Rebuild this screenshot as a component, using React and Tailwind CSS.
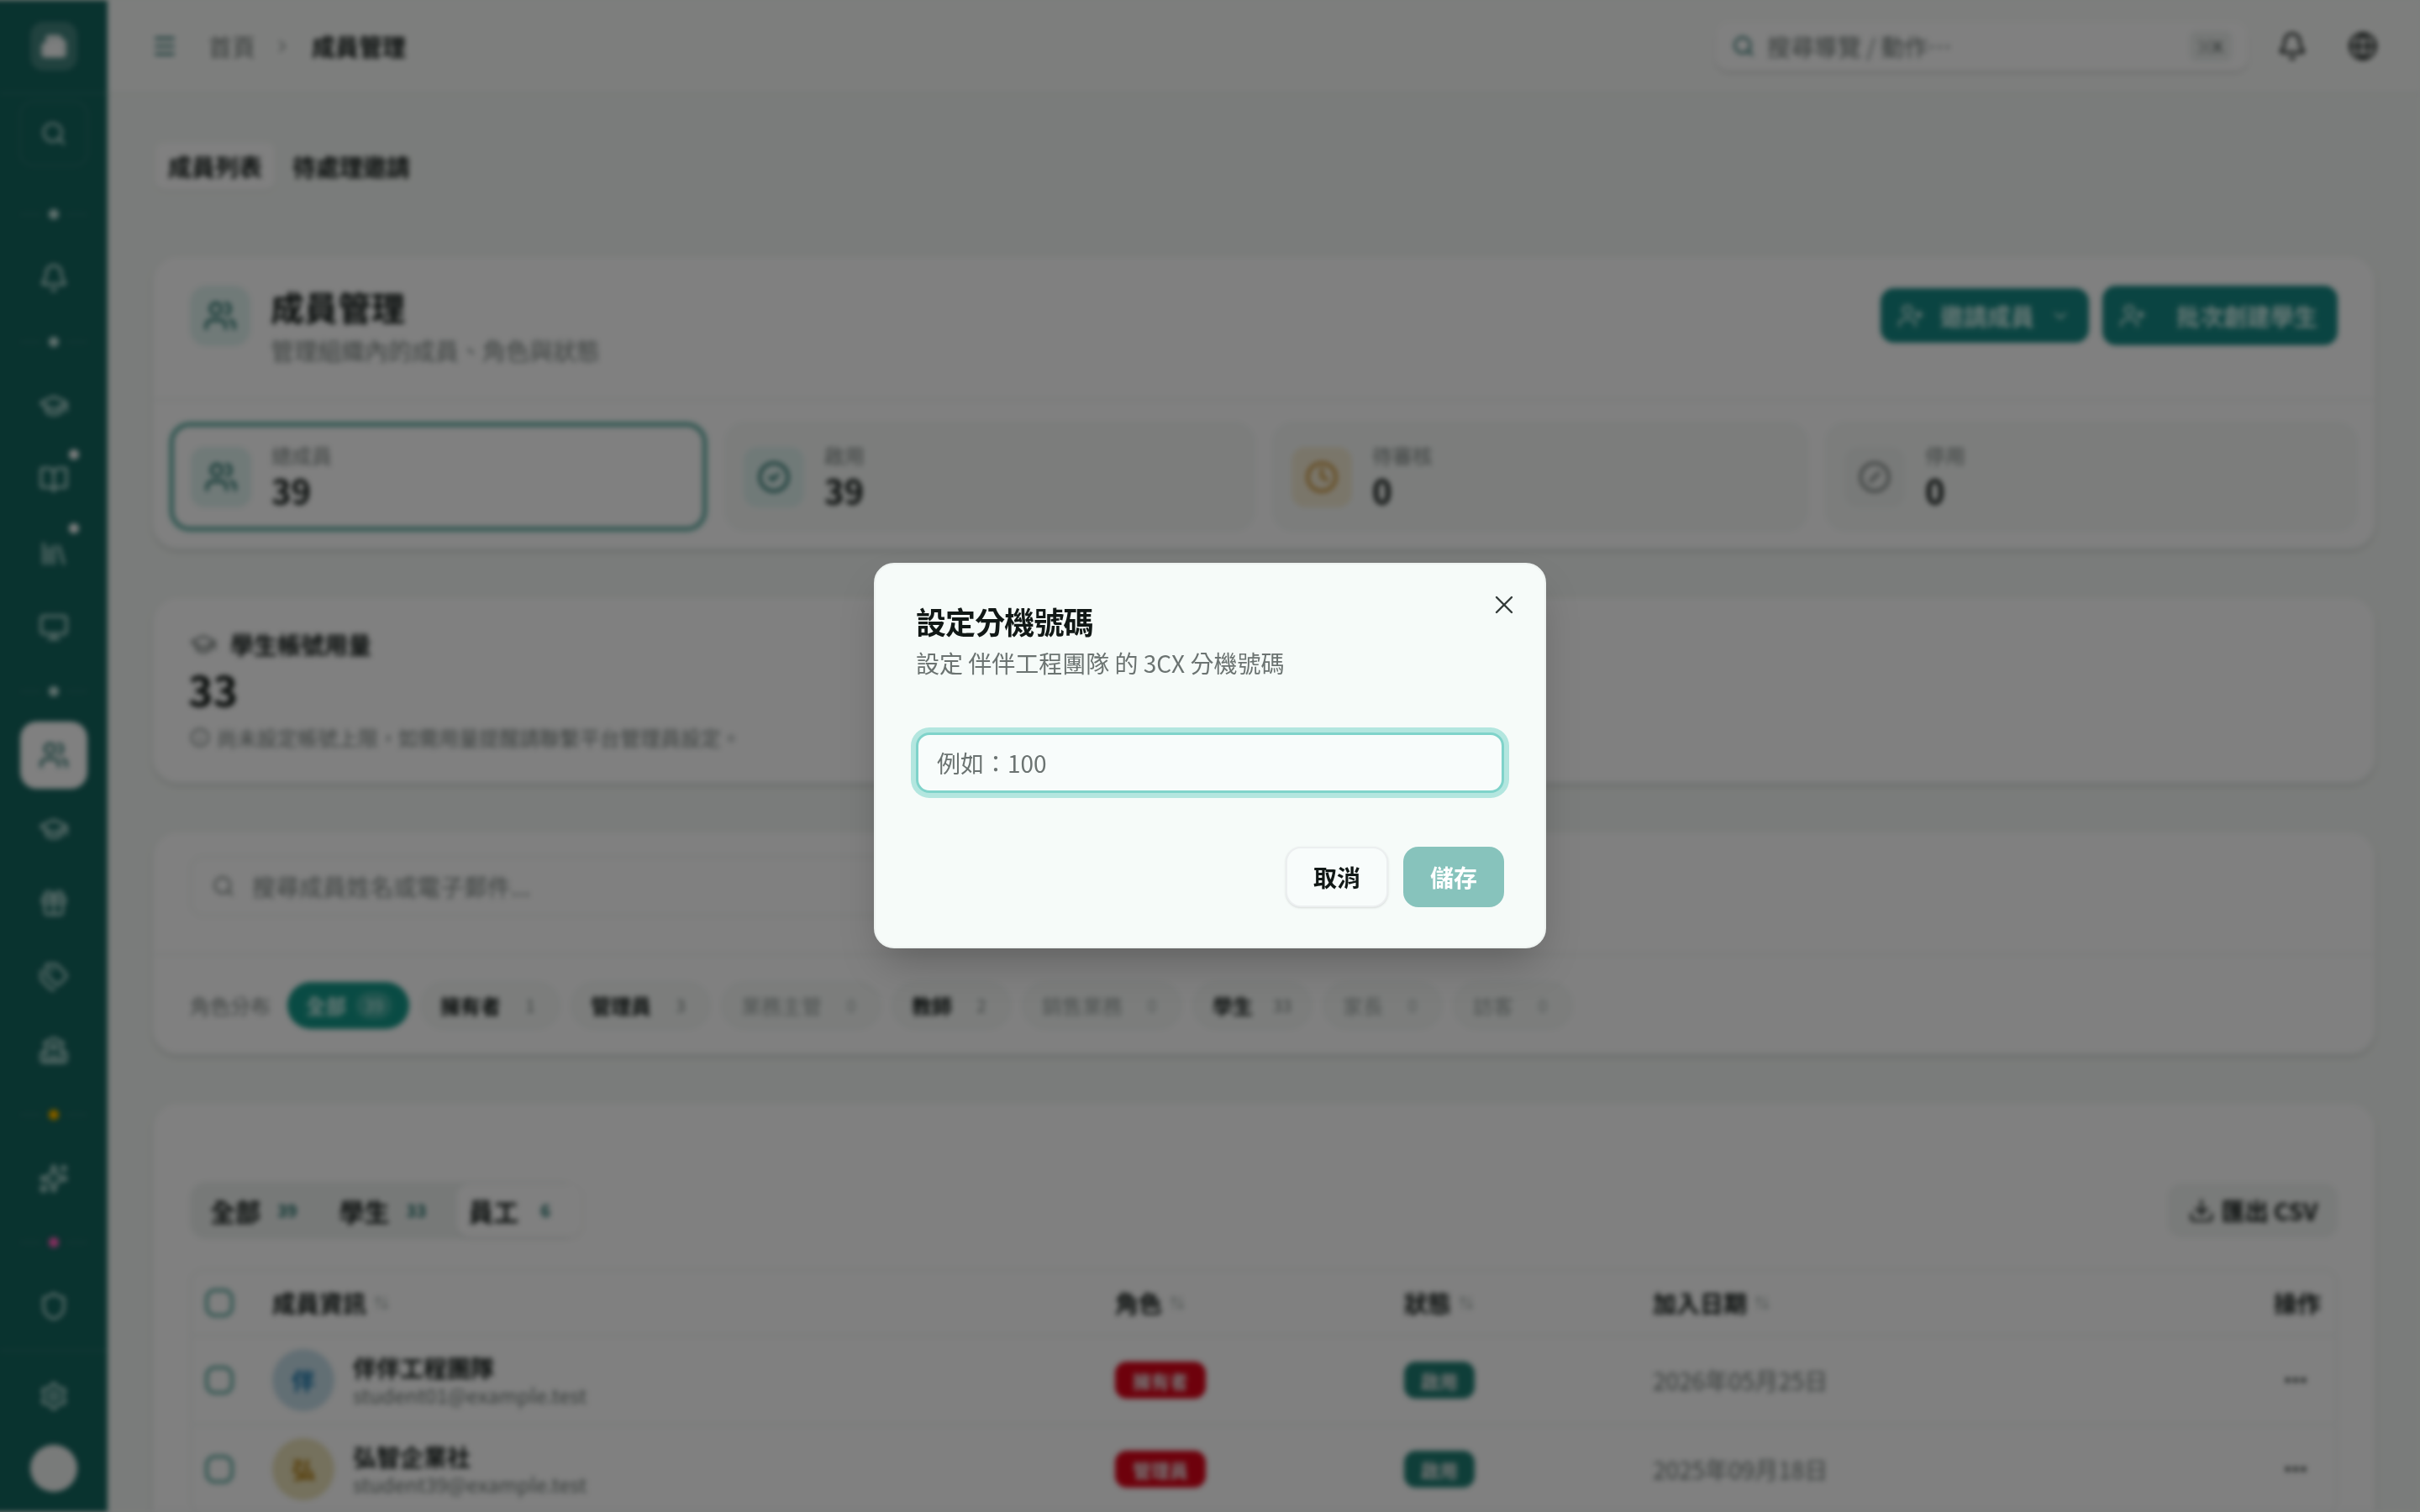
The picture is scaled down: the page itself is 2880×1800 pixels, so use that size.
import {
  Menu, ChevronRight, ChevronDown, Search, Bell, Globe, UserPlus, Users, CircleCheck, Clock, CircleSlash,
  GraduationCap, BookOpen, Library, Monitor, Gift, Tags, School, Sparkles, Shield, Settings, Info, Download,
  ArrowUpDown, Ellipsis, X, Building2,
} from "lucide-react";

const font = { fontFamily: '"Noto Sans CJK TC", "Noto Sans", sans-serif' };

const SideIcon = ({ icon: Icon, active, badge }) => (
  <div className="relative h-[88px] w-full flex items-center justify-center shrink-0">
    <div className={`w-[80px] h-[80px] rounded-[20px] flex items-center justify-center ${active ? "bg-white text-[#1d625c]" : "text-[#c9e4e0]"}`}>
      <Icon className="w-9 h-9" />
    </div>
    {badge && <span className="absolute right-[34px] top-[8px] w-3 h-3 rounded-full bg-white" />}
  </div>
);

const SideDot = ({ color = "bg-[#c9e4e0]" }) => (
  <div className="h-[64px] w-full flex items-center justify-center gap-[10px] shrink-0">
    <span className="w-[24px] h-[2px] bg-white/10" />
    <span className={`w-3 h-3 rounded-full ${color}`} />
    <span className="w-[24px] h-[2px] bg-white/10" />
  </div>
);

const Sidebar = () => (
  <aside className="w-[128px] h-screen shrink-0 bg-[#1d625c] flex flex-col items-center">
    <div className="w-full h-[112px] shrink-0 border-b-2 border-white/10 flex items-center justify-center">
      <div className="w-[56px] h-[58px] rounded-[16px] bg-white/20 flex items-center justify-center">
        <Building2 className="w-8 h-8 text-white fill-white/80" />
      </div>
    </div>
    <div className="w-[82px] h-[78px] mt-2 mb-[25px] shrink-0 rounded-[16px] border-2 border-white/10 flex items-center justify-center">
      <Search className="w-8 h-8 text-[#c9e4e0]" />
    </div>
    <SideDot />
    <SideIcon icon={Bell} />
    <SideDot />
    <SideIcon icon={GraduationCap} />
    <SideIcon icon={BookOpen} badge />
    <SideIcon icon={Library} badge />
    <SideIcon icon={Monitor} />
    <SideDot />
    <SideIcon icon={Users} active />
    <SideIcon icon={GraduationCap} />
    <SideIcon icon={Gift} />
    <SideIcon icon={Tags} />
    <SideIcon icon={School} />
    <SideDot color="bg-amber-400" />
    <SideIcon icon={Sparkles} />
    <SideDot color="bg-pink-400" />
    <SideIcon icon={Shield} />
    <div className="w-full mt-2 border-t-2 border-white/10 pt-[9px] flex flex-col items-center shrink-0">
      <SideIcon icon={Settings} />
      <div className="w-[56px] h-[56px] mt-[14px] rounded-full bg-[#f3f5f4]" />
    </div>
  </aside>
);

const Header = () => (
  <header className="h-[112px] shrink-0 pl-[52px] pr-[50px] flex items-center justify-between bg-white/60 border-b-2 border-[#e9eeec]">
    <div className="flex items-center">
      <Menu className="w-8 h-8 text-[#1d625c]" />
      <span className="ml-[36px] text-[28px] text-[#6f7775]">首頁</span>
      <ChevronRight className="w-6 h-6 ml-[20px] mr-[23px] text-[#8a9290]" />
      <span className="text-[28px] font-bold text-[#111816]">成員管理</span>
    </div>
    <div className="flex items-center">
      <div className="w-[635px] h-[58px] rounded-[16px] bg-white shadow-md px-5 flex items-center">
        <Search className="w-7 h-7 text-[#1d625c]" />
        <span className="ml-[14px] text-[28px] text-[#6f7775]">搜尋導覽 / 動作⋯</span>
        <span className="ml-auto px-[10px] h-[36px] rounded-[8px] bg-[#eef1f0] text-[18px] font-bold text-[#7a8280] flex items-center">⌘K</span>
      </div>
      <Bell className="ml-[34px] w-9 h-9 text-[#111816]" />
      <Globe className="ml-[48px] w-9 h-9 text-[#111816]" />
    </div>
  </header>
);

const Card = ({ className = "", children }) => (
  <section className={`rounded-[32px] bg-white border-2 border-[#f1f4f3] shadow-md ${className}`}>{children}</section>
);

const Stat = ({ icon: Icon, label, value, active, iconClass }) => (
  <div className={`h-[129px] rounded-[24px] flex items-center px-5 ${active ? "border-[5px] border-[#68a89f] ring-2 ring-[#d5efea]" : "bg-[#f8faf9] border-2 border-[#f3f6f5]"}`}>
    <div className={`w-[72px] h-[72px] rounded-[16px] flex items-center justify-center shrink-0 ${iconClass}`}>
      <Icon className="w-10 h-10" />
    </div>
    <div className="ml-[24px]">
      <div className="text-[24px] leading-[30px] text-[#7a8280] whitespace-nowrap">{label}</div>
      <div className="text-[40px] leading-[52px] font-bold text-[#111816]">{value}</div>
    </div>
  </div>
);

const RoleChip = ({ label, count, muted }) => (
  <div className="h-[56px] rounded-full bg-[#f8faf9] border-2 border-[#f1f4f3] pl-[21px] pr-[8px] flex items-center gap-[10px] shrink-0">
    <span className={`text-[24px] whitespace-nowrap ${muted ? "text-[#9aa2a0]" : "font-bold text-[#111816]"}`}>{label}</span>
    <span className={`w-[50px] text-center text-[20px] ${muted ? "text-[#a9b1af]" : "text-[#7a8280]"}`}>{count}</span>
  </div>
);

const Row = ({ initial, tint, name, email, role, date }) => (
  <div className="h-[106px] flex items-center border-t-2 border-[#f1f4f3] px-4">
    <span className="w-[34px] h-[34px] rounded-[12px] border-[4px] border-[#68a89f] shrink-0" />
    <div className={`ml-[46px] w-[74px] h-[74px] rounded-full flex items-center justify-center text-[28px] font-bold shrink-0 ${tint}`}>{initial}</div>
    <div className="ml-[22px] w-[907px] shrink-0">
      <div className="text-[28px] leading-[36px] font-bold text-[#111816]">{name}</div>
      <div className="text-[24px] leading-[30px] text-[#6f7775]">{email}</div>
    </div>
    <div className="w-[344px] shrink-0">
      <span className="inline-flex items-center justify-center w-[108px] h-[44px] rounded-[14px] bg-[#c00a1c] text-[22px] font-bold text-[#e8e8e8]">{role}</span>
    </div>
    <div className="w-[296px] shrink-0">
      <span className="inline-flex items-center justify-center w-[84px] h-[44px] rounded-[14px] bg-[#2a7970] text-[22px] font-bold text-[#e8e8e8]">啟用</span>
    </div>
    <div className="flex-1 text-[28px] text-[#6f7775]">{date}</div>
    <Ellipsis className="w-8 h-8 mr-[16px] text-[#111816]" />
  </div>
);

const HeadCell = ({ className = "", label }) => (
  <div className={`flex items-center gap-2 text-[28px] font-bold text-[#111816] whitespace-nowrap shrink-0 ${className}`}>
    {label}
    <ArrowUpDown className="w-5 h-5 text-[#a9b1af]" />
  </div>
);

const Background = () => (
  <main className="flex-1 min-w-0 h-screen overflow-hidden flex flex-col bg-[#f5f8f6]">
    <Header />
    <div className="px-[52px] pt-[57px]">
      {/* Tabs */}
      <div className="flex items-center h-[57px] pl-[4px]">
        <div className="h-[57px] px-4 rounded-[12px] bg-white shadow-sm flex items-center text-[28px] font-bold text-[#111816]">成員列表</div>
        <div className="h-[57px] pl-5 pr-4 flex items-center text-[28px] font-bold text-[#111816]">待處理邀請</div>
      </div>

      {/* Summary */}
      <Card className="mt-[77px] h-[351px] overflow-hidden">
        <div className="h-[172px] px-[44px] pt-[35px] flex items-start justify-between border-b-2 border-[#f1f4f3]">
          <div className="flex items-start">
            <div className="w-[72px] h-[72px] rounded-[20px] bg-[#e3f3f0] flex items-center justify-center">
              <Users className="w-10 h-10 text-[#1d625c]" />
            </div>
            <div className="ml-6">
              <h1 className="text-[40px] leading-[50px] font-bold text-[#111816]">成員管理</h1>
              <p className="mt-[9px] text-[28px] leading-[36px] text-[#7a8280]">管理組織內的成員、角色與狀態</p>
            </div>
          </div>
          <div className="flex items-center gap-[16px]">
            <button className="w-[248px] h-[65px] rounded-[16px] bg-[#248480] text-[#d8f2ee] pl-5 pr-[22px] flex items-center justify-between text-[28px] font-bold">
              <UserPlus className="w-8 h-8" />
              <span>邀請成員</span>
              <ChevronDown className="w-6 h-6" />
            </button>
            <button className="w-[280px] h-[71px] rounded-[16px] bg-[#248480] text-[#d8f2ee] pl-5 pr-6 flex items-center justify-between text-[28px] font-bold">
              <UserPlus className="w-8 h-8" />
              <span>批次創建學生</span>
            </button>
          </div>
        </div>
        <div className="grid grid-cols-[639px_630px_636px_632px] gap-[22px] px-[20px] pt-[26px]">
          <Stat icon={Users} label="總成員" value="39" active iconClass="bg-[#e3f3f0] text-[#1d625c]" />
          <Stat icon={CircleCheck} label="啟用" value="39" iconClass="bg-[#e3f3f0] text-[#1d625c]" />
          <Stat icon={Clock} label="待審核" value="0" iconClass="bg-[#f3ecd8] text-[#b8852f]" />
          <Stat icon={CircleSlash} label="停用" value="0" iconClass="bg-[#f1f3f2] text-[#6f7775]" />
        </div>
      </Card>

      {/* Student quota */}
      <Card className="mt-[55px] h-[224px] px-[44px] pt-[36px]">
        <div className="flex items-center gap-[16px]">
          <GraduationCap className="w-8 h-8 text-[#6f7775]" />
          <span className="text-[28px] leading-[40px] font-bold text-[#111816]">學生帳號用量</span>
        </div>
        <div className="-ml-[2px] text-[50px] leading-[64px] font-bold text-[#0c1210]">33</div>
        <div className="mt-[10px] flex items-center gap-2 text-[24px] leading-[34px] text-[#7a8280]">
          <Info className="w-6 h-6" />
          尚未設定帳號上限，如需用量提醒請聯繫平台管理員設定。
        </div>
      </Card>

      {/* Filters */}
      <Card className="mt-[55px] h-[268px] overflow-hidden">
        <div className="h-[147px] px-[44px] pt-[29px] border-b-2 border-[#f1f4f3]">
          <div className="w-[1300px] h-[72px] rounded-[16px] bg-white border-2 border-[#f1f4f3] px-6 flex items-center">
            <Search className="w-7 h-7 text-[#7a8280]" />
            <span className="ml-[20px] text-[28px] text-[#7a8280]">搜尋成員姓名或電子郵件...</span>
          </div>
        </div>
        <div className="h-[119px] px-[44px] flex items-center gap-[14px]">
          <span className="text-[24px] text-[#7a8280] mr-[6px] whitespace-nowrap">角色分布</span>
          <div className="h-[56px] w-[145px] shrink-0 rounded-full bg-[#249285] pl-[22px] flex items-center gap-[12px] text-[#d8f2ee]">
            <span className="text-[24px] font-bold whitespace-nowrap">全部</span>
            <span className="w-[42px] h-[32px] rounded-full bg-white/20 flex items-center justify-center text-[20px]">39</span>
          </div>
          <RoleChip label="擁有者" count="1" />
          <RoleChip label="管理員" count="3" />
          <RoleChip label="業務主管" count="0" muted />
          <RoleChip label="教師" count="2" />
          <RoleChip label="銷售業務" count="0" muted />
          <RoleChip label="學生" count="33" />
          <RoleChip label="家長" count="0" muted />
          <RoleChip label="訪客" count="0" muted />
        </div>
      </Card>

      {/* Table */}
      <Card className="mt-[55px] h-[600px] px-[44px] pt-[94px]">
        <div className="flex items-center justify-between">
          <div className="w-[464px] h-[68px] rounded-[20px] bg-[#eff2f1] flex items-center pl-[24px] whitespace-nowrap">
            <span className="text-[30px] font-bold text-[#111816]">全部</span>
            <span className="ml-[20px] text-[20px] font-bold text-[#1d625c]">39</span>
            <span className="ml-[50px] text-[30px] font-bold text-[#111816]">學生</span>
            <span className="ml-[20px] text-[20px] font-bold text-[#1d625c]">33</span>
            <span className="ml-[36px] h-[64px] pl-[14px] pr-[38px] rounded-[16px] bg-white shadow-sm flex items-center">
              <span className="text-[30px] font-bold text-[#111816]">員工</span>
              <span className="ml-[26px] text-[20px] font-bold text-[#1d625c]">6</span>
            </span>
          </div>
          <div className="w-[202px] h-[64px] rounded-[16px] bg-[#f3f5f4] flex items-center justify-center gap-2 text-[28px] font-bold text-[#111816] whitespace-nowrap">
            <Download className="w-8 h-8" />
            匯出 CSV
          </div>
        </div>
        <div className="mt-[36px] rounded-[16px] border-2 border-[#f1f4f3]">
          <div className="h-[76px] flex items-center px-4">
            <span className="w-[34px] h-[34px] rounded-[12px] border-[4px] border-[#68a89f] shrink-0" />
            <HeadCell className="ml-[46px] w-[1003px]" label="成員資訊" />
            <HeadCell className="w-[344px]" label="角色" />
            <HeadCell className="w-[296px]" label="狀態" />
            <HeadCell className="flex-1" label="加入日期" />
            <span className="text-[28px] font-bold text-[#111816] mr-[2px] whitespace-nowrap">操作</span>
          </div>
          <Row initial="伴" tint="bg-[#c8dde6] text-[#1f6f9c]" name="伴伴工程團隊" email="student01@example.test" role="擁有者" date="2026年05月25日" />
          <Row initial="弘" tint="bg-[#e8e1c0] text-[#a57a1e]" name="弘智企業社" email="student39@example.test" role="管理員" date="2025年09月18日" />
        </div>
      </Card>
    </div>
  </main>
);

export default function App() {
  return (
    <div className="relative w-full h-screen overflow-hidden bg-[#7b7e7c]" style={font}>
      {/* Page behind the dialog, dimmed and blurred */}
      <div className="-ml-3 pl-3 w-[calc(100%+12px)] h-screen flex bg-[#1d625c] blur-[3px] brightness-50 saturate-[1.2]">
        <Sidebar />
        <Background />
      </div>

      {/* Extension dialog */}
      <div className="fixed inset-0 flex items-start justify-center pt-[670px]">
        <div className="relative w-[800px] h-[459px] rounded-[24px] bg-[#f6fbf9] border-2 border-[#eef3f1] shadow-2xl px-[48px] pt-[45px] flex flex-col">
          <button className="absolute right-[30px] top-[30px] w-[36px] h-[36px] flex items-center justify-center text-[#333b39]">
            <X className="w-9 h-9" strokeWidth={1.6} />
          </button>
          <h2 className="text-[36px] leading-[44px] font-bold tracking-tight text-[#111816]">設定分機號碼</h2>
          <p className="mt-[8px] text-[28px] leading-[40px] text-[#6b7371]">設定 伴伴工程團隊 的 3CX 分機號碼</p>
          <div className="mt-[63px] h-[72px] rounded-[16px] bg-[#f8fcfb] border-[3px] border-[#7fd3ca] ring-[6px] ring-[#b3e6df] px-[22px] flex items-center text-[28px] text-[#6b7371]">
            例如：100
          </div>
          <div className="mt-[64px] flex justify-end gap-[18px]">
            <button className="w-[122px] h-[72px] rounded-[18px] bg-[#f8fcfb] border-2 border-[#eceff0] shadow-sm text-[28px] font-bold text-[#111816]">取消</button>
            <button className="w-[120px] h-[72px] rounded-[18px] bg-[#87c3bc] text-[28px] font-bold text-white">儲存</button>
          </div>
        </div>
      </div>
    </div>
  );
}
